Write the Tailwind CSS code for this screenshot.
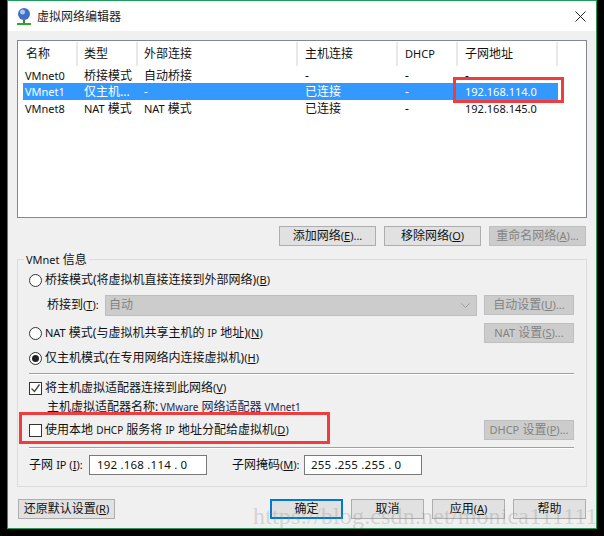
<!DOCTYPE html>
<html lang="zh-CN">
<head>
  <meta charset="UTF-8" />
  <title>虚拟网络编辑器</title>
  <script src="https://cdn.jsdelivr.net/npm/@tailwindcss/browser@4"></script>
</head>
<body class="bg-black">
<div class="relative w-[604px] h-[536px] overflow-hidden bg-black font-['Noto_Sans','Noto_Sans_CJK_SC',sans-serif] text-[12px] leading-[16px] text-[#111]">

  <!-- window -->
  <div class="ml-[7px] w-[590px] h-[529px] border border-[#1f9d5b] bg-[#f0f0f0]">

    <!-- title bar -->
    <div class="flex items-center h-[30px] bg-white pl-[8px] pr-[8px]">
      <svg class="w-[16px] h-[18px]" viewBox="0 0 16 18">
        <circle cx="8" cy="7" r="6" fill="#3f6fc4"/>
        <circle cx="6.5" cy="5" r="2.5" fill="#a8c8f0"/>
        <rect x="7" y="13" width="2" height="3" fill="#4a7a3a"/>
        <rect x="1" y="16" width="14" height="2" fill="#2fa82f"/>
      </svg>
      <span class="ml-[5px] pt-[1px] text-[#222]">虚拟网络编辑器</span>
      <svg class="ml-auto mr-[2px] w-[11px] h-[11px]" viewBox="0 0 11 11"><path d="M.5.5l10 10M10.5.5l-10 10" stroke="#222" stroke-width="1" fill="none"/></svg>
    </div>

    <div class="pl-[9px] pr-[10px] pt-[9px]">
      <!-- network list -->
      <div class="w-[570px] h-[178px] border border-[#828790] bg-white">
        <div class="flex h-[25px] pl-[5px] pt-[1px]">
          <div class="w-[55px] pl-[3px] pt-[4px] border-r-2 border-[#e8e8e8]">名称</div>
          <div class="w-[60px] pl-[6px] pt-[4px] border-r-2 border-[#e8e8e8]">类型</div>
          <div class="w-[160px] pl-[6px] pt-[4px] border-r-2 border-[#e8e8e8]">外部连接</div>
          <div class="w-[100px] pl-[7px] pt-[4px] border-r-2 border-[#e8e8e8]">主机连接</div>
          <div class="w-[60px] pl-[7px] pt-[4px] border-r-2 border-[#e8e8e8] text-[11px]">DHCP</div>
          <div class="w-[100px] pl-[7px] pt-[4px] border-r-2 border-[#e8e8e8]">子网地址</div>
        </div>
        <div class="flex h-[17px] pl-[5px] pt-[2px] items-center">
          <div class="w-[61px] pl-[2px] text-[11px]">VMnet0</div>
          <div class="w-[60px]">桥接模式</div>
          <div class="w-[161px]">自动桥接</div>
          <div class="w-[100px]">-</div>
          <div class="w-[60px]">-</div>
          <div>-</div>
        </div>
        <div class="flex h-[17px] ml-[5px] w-[535px] pt-[1px] items-center bg-[#3399ff] text-white">
          <div class="w-[61px] pl-[2px] text-[11px]">VMnet1</div>
          <div class="w-[60px]">仅主机...</div>
          <div class="w-[161px]">-</div>
          <div class="w-[100px]">已连接</div>
          <div class="w-[60px]">-</div>
          <div class="text-[11px]">192.168.114.0</div>
        </div>
        <div class="flex h-[17px] pl-[5px] pt-[1px] items-center">
          <div class="w-[61px] pl-[2px] text-[11px]">VMnet8</div>
          <div class="w-[60px]"><span class="text-[11px]">NAT</span> 模式</div>
          <div class="w-[161px]"><span class="text-[11px]">NAT</span> 模式</div>
          <div class="w-[100px]">已连接</div>
          <div class="w-[60px]">-</div>
          <div class="text-[11px]">192.168.145.0</div>
        </div>
      </div>

      <!-- list buttons -->
      <div class="flex justify-end gap-[8px] mt-[8px] w-[569px]">
        <button class="w-[97px] h-[20px] border border-[#adadad] bg-[#e1e1e1]">添加网络<span class="text-[11px]">(<u>E</u>)...</span></button>
        <button class="w-[97px] h-[20px] border border-[#adadad] bg-[#e1e1e1]">移除网络<span class="text-[11px]">(<u>O</u>)</span></button>
        <button class="w-[97px] h-[20px] border border-[#bfbfbf] bg-[#cccccc] text-[#838383]">重命名网络<span class="text-[11px]">(<u>A</u>)...</span></button>
      </div>

      <!-- VMnet info group -->
      <div class="relative mt-[13px] w-[570px] h-[228px] border border-[#dcdcdc] pl-[11px] pr-[12px]">
        <div class="absolute left-[6px] top-[-8px] px-[2px] bg-[#f0f0f0]"><span class="text-[11px]">VMnet</span> 信息</div>

        <div class="flex items-center h-[20px] mt-[10px]">
          <span class="w-[13px] h-[13px] rounded-full border border-[#333] bg-white"></span>
          <span class="ml-[3px]">桥接模式(将虚拟机直接连接到外部网络)<span class="text-[11px]">(<u>B</u>)</span></span>
        </div>

        <div class="flex items-center h-[20px] mt-[5px]">
          <span class="ml-[18px] w-[58px]">桥接到<span class="text-[11px]">(<u>T</u>):</span></span>
          <div class="flex items-center w-[372px] h-[21px] border border-[#bdbdbd] bg-[#cccccc] pl-[3px] pr-[6px] text-[#838383]">
            <span>自动</span>
            <svg class="ml-auto w-[9px] h-[5px]" viewBox="0 0 9 5"><path d="M.5.5l4 4 4-4" stroke="#a0a0a0" fill="none"/></svg>
          </div>
          <button class="ml-auto w-[90px] h-[20px] border border-[#bfbfbf] bg-[#cccccc] text-[#838383]">自动设置<span class="text-[11px]">(<u>U</u>)...</span></button>
        </div>

        <div class="flex items-center h-[20px] mt-[8px]">
          <span class="w-[13px] h-[13px] rounded-full border border-[#333] bg-white"></span>
          <span class="ml-[3px]"><span class="text-[11px]">NAT</span> 模式(与虚拟机共享主机的 <span class="text-[10px]">IP</span> 地址)<span class="text-[11px]">(<u>N</u>)</span></span>
          <button class="ml-auto w-[90px] h-[20px] border border-[#bfbfbf] bg-[#cccccc] text-[#838383]"><span class="text-[11px]">NAT</span> 设置<span class="text-[11px]">(<u>S</u>)...</span></button>
        </div>

        <div class="flex items-center h-[20px] mt-[5px]">
          <span class="flex items-center justify-center w-[13px] h-[13px] rounded-full border border-[#333] bg-white">
            <span class="w-[7px] h-[7px] rounded-full bg-[#222]"></span>
          </span>
          <span class="ml-[3px]">仅主机模式(在专用网络内连接虚拟机)<span class="text-[11px]">(<u>H</u>)</span></span>
        </div>

        <div class="mt-[5px] h-[2px] border-t border-b-white border-b border-t-[#a0a0a0]"></div>

        <div class="flex items-center h-[20px] mt-[3px]">
          <span class="flex items-center justify-center w-[13px] h-[13px] border border-[#333] bg-white">
            <svg class="w-[11px] h-[11px]" viewBox="0 0 11 11"><path d="M1.5 5.5l3 3 5-7" stroke="#444" stroke-width="1.3" fill="none"/></svg>
          </span>
          <span class="ml-[3px]">将主机虚拟适配器连接到此网络<span class="text-[11px]">(<u>V</u>)</span></span>
        </div>

        <div class="flex items-center h-[18px] pl-[18px]">主机虚拟适配器名称: <span class="ml-[2px] text-[#1a2a50]"><span class="text-[10px]">VMware</span> 网络适配器 <span class="text-[10px]">VMnet1</span></span></div>

        <div class="flex items-center h-[20px] mt-[4px]">
          <span class="w-[13px] h-[13px] border border-[#333] bg-white"></span>
          <span class="ml-[3px]">使用本地 <span class="text-[10px]">DHCP</span> 服务将 <span class="text-[10px]">IP</span> 地址分配给虚拟机<span class="text-[11px]">(<u>D</u>)</span></span>
          <button class="ml-auto w-[90px] h-[20px] border border-[#bfbfbf] bg-[#cccccc] text-[#838383]"><span class="text-[11px]">DHCP</span> 设置<span class="text-[11px]">(<u>P</u>)...</span></button>
        </div>

        <div class="mt-[7px] h-[2px] border-t border-b-white border-b border-t-[#a0a0a0]"></div>

        <div class="flex items-center h-[20px] mt-[6px]">
          <span class="w-[60px]">子网 <span class="text-[11px]">IP (<u>I</u>):</span></span>
          <div class="flex items-center w-[118px] h-[20px] border border-[#7a7a7a] bg-white pl-[7px] text-[11.5px] tracking-[0.2px]">192 .168 .114 . 0</div>
          <span class="ml-[25px] w-[72px]">子网掩码<span class="text-[11px]">(<u>M</u>):</span></span>
          <div class="flex items-center w-[118px] h-[20px] border border-[#7a7a7a] bg-white pl-[6px] text-[11.5px] tracking-[0.2px]">255 .255 .255 . 0</div>
        </div>
      </div>

      <!-- bottom buttons -->
      <div class="flex mt-[12px] w-[570px]">
        <button class="ml-[1px] w-[97px] h-[20px] border border-[#adadad] bg-[#e1e1e1]">还原默认设置<span class="text-[11px]">(<u>R</u>)</span></button>
        <button class="ml-[155px] w-[73px] h-[20px] border-2 border-[#0078d7] bg-[#e1e1e1]">确定</button>
        <button class="ml-[8px] w-[73px] h-[20px] border border-[#adadad] bg-[#e1e1e1]">取消</button>
        <button class="ml-[8px] w-[73px] h-[20px] border border-[#adadad] bg-[#e1e1e1]">应用<span class="text-[11px]">(<u>A</u>)</span></button>
        <button class="ml-[8px] w-[73px] h-[20px] border border-[#adadad] bg-[#e1e1e1]">帮助</button>
      </div>
    </div>
  </div>

  <!-- annotation boxes drawn over the screenshot -->
  <div class="absolute left-[453px] top-[77px] w-[111px] h-[26px] border-[3px] border-[#f03c3c]"></div>
  <div class="absolute left-[19px] top-[412px] w-[311px] h-[32px] border-[3px] border-[#f03c3c]"></div>

  <!-- watermark -->
  <div class="absolute left-[253px] top-[501px] font-['Liberation_Serif',serif] text-[24px] leading-[30px] tracking-[0.15px] text-[#8a8a8a]/30 whitespace-nowrap">https://blog.csdn.net/monica111111</div>
</div>
</body>
</html>
